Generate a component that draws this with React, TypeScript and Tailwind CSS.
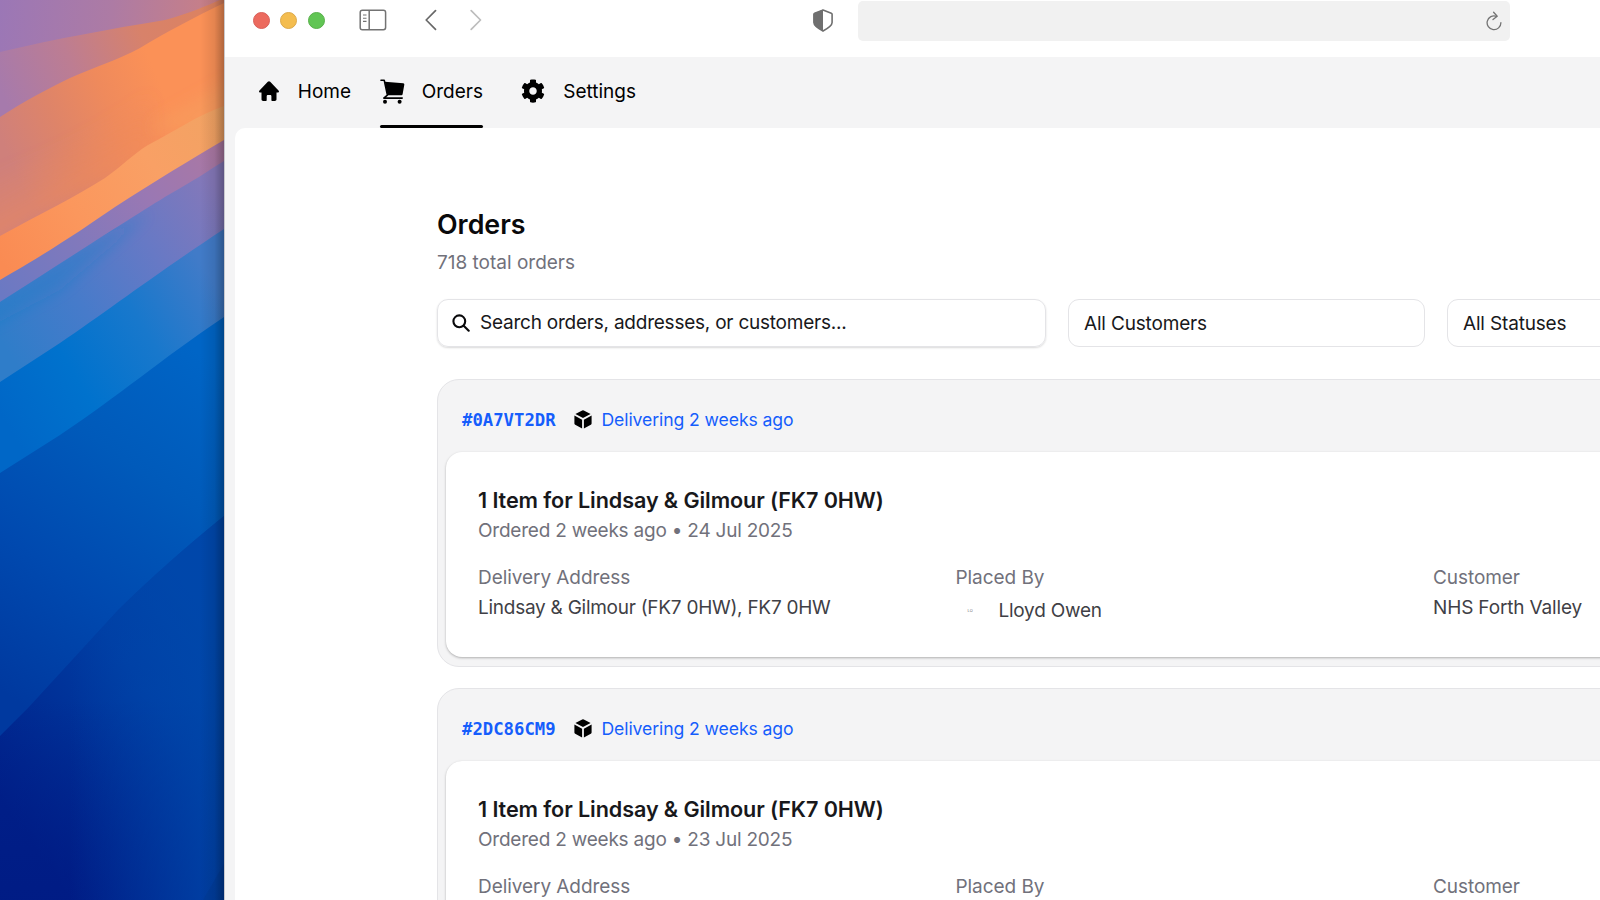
import type { ReactNode } from "react";
import { FaCog } from "react-icons/fa";

interface Order {
  id: string; status: string; title: string; ordered: string; date: string;
  address: string; placedBy: string; customer: string;
}

const orders: Order[] = [
  {
    id: "#0A7VT2DR", status: "Delivering 2 weeks ago", title: "1 Item for Lindsay & Gilmour (FK7 0HW)",
    ordered: "Ordered 2 weeks ago", date: "24 Jul 2025", address: "Lindsay & Gilmour (FK7 0HW), FK7 0HW",
    placedBy: "Lloyd Owen", customer: "NHS Forth Valley",
  },
  {
    id: "#2DC86CM9", status: "Delivering 2 weeks ago", title: "1 Item for Lindsay & Gilmour (FK7 0HW)",
    ordered: "Ordered 2 weeks ago", date: "23 Jul 2025", address: "Lindsay & Gilmour (FK7 0HW), FK7 0HW",
    placedBy: "Lloyd Owen", customer: "NHS Forth Valley",
  },
];

function Gradient({ id, from, to, stops }: { id: string; from: [number, number]; to: [number, number]; stops: string[] }) {
  return (
    <linearGradient id={id} gradientUnits="userSpaceOnUse" x1={from[0]} y1={from[1]} x2={to[0]} y2={to[1]}>
      {stops.map((c, i) => <stop key={i} offset={i / (stops.length - 1)} stopColor={c} />)}
    </linearGradient>
  );
}

function Wallpaper() {
  return (
    <svg width="224" height="900" viewBox="0 0 224 900" className="block">
      <defs>
        <Gradient id="w1" from={[0, 0]} to={[224, 20]} stops={["#9b77b6", "#ad7ba4", "#cc8082"]} />
        <Gradient id="w2" from={[0, 90]} to={[210, 0]} stops={["#a67aac", "#bd7d92", "#d8826a", "#dc8260"]} />
        <Gradient id="w3" from={[10, 160]} to={[165, 95]} stops={["#cf807b", "#de8469", "#ef8a5c", "#fb9157"]} />
        <Gradient id="w3b" from={[60, 130]} to={[100, 200]} stops={["#f08a5800", "#f28b5899"]} />
        <Gradient id="w4" from={[0, 260]} to={[224, 110]} stops={["#fa8b53", "#fb975d", "#f9a065", "#f1a363"]} />
        <Gradient id="w5" from={[0, 290]} to={[224, 150]} stops={["#6b79c3", "#8079bc", "#9a78b3", "#ac78a2"]} />
        <Gradient id="w6" from={[0, 340]} to={[224, 200]} stops={["#2f7dc9", "#477bca", "#6779c5", "#8578b9"]} />
        <Gradient id="w7" from={[10, 430]} to={[224, 300]} stops={["#0067c7", "#0072cd", "#1878cc", "#417bc8"]} />
        <Gradient id="w8" from={[224, 370]} to={[0, 690]} stops={["#0065c6", "#005aba", "#0049af", "#00399f"]} />
        <Gradient id="w9" from={[224, 640]} to={[0, 800]} stops={["#0047ab", "#003ea4", "#002f96", "#00218a"]} />
        <Gradient id="w10" from={[0, 700]} to={[0, 900]} stops={["#00198200", "#001982aa"]} />
        <Gradient id="w11" from={[70, 0]} to={[215, 0]} stops={["#0047aa00", "#0047aacc"]} />
        <linearGradient id="shade">
          <stop offset="0" stopColor="#000" stopOpacity="0" />
          <stop offset="0.6" stopColor="#000" stopOpacity="0.09" />
          <stop offset="1" stopColor="#000" stopOpacity="0.3" />
        </linearGradient>
        <filter id="soft"><feGaussianBlur stdDeviation="7" /></filter>
        <clipPath id="band"><path d="M0 302C60 264 130 218 170 194C190 183 208 171 224 161V900H0Z" /></clipPath>
      </defs>
      <rect width="224" height="900" fill="url(#w1)" />
      <path fill="url(#w2)" d="M0 52C60 38 110 29 165 20C190 13 206 6 220 0H224V900H0Z" />
      <path fill="url(#w3)" d="M0 117C25 101 45 90 70 78C95 67 120 59 140 48C168 31 195 17 224 3V900H0Z" />
      <path fill="url(#w3b)" filter="url(#soft)" d="M-20 180C50 155 95 135 150 95V150L-20 250Z" />
      <path fill="#f4a262" fillOpacity="0.4" filter="url(#soft)" d="M160 120L240 75V130H150Z" />
      <path fill="url(#w4)" d="M0 236C40 214 75 197 105 178C122 166 132 155 148 145C175 131 198 115 224 106V900H0Z" />
      <path fill="url(#w5)" d="M0 280C55 248 80 231 115 207C155 181 190 160 224 140V900H0Z" />
      <path fill="url(#w6)" d="M0 302C60 264 130 218 170 194C190 183 208 171 224 161V900H0Z" />
      <g clipPath="url(#band)">
        <path fill="#1c7bc6" fillOpacity="0.35" filter="url(#soft)" d="M-20 310L70 252L150 213L60 290L-20 332Z" />
      </g>
      <path fill="url(#w7)" d="M0 382L60 343C110 309 150 278 224 229V900H0Z" />
      <path fill="url(#w8)" d="M0 473L60 435C120 395 160 360 224 317V900H0Z" />
      <path fill="url(#w9)" d="M0 736L28 708L118 610C150 579 185 547 224 516V900H0Z" />
      <path fill="url(#w10)" d="M0 736L28 708L118 610C150 579 185 547 224 516V900H0Z" />
      <path fill="url(#w11)" d="M70 900V662L118 610C150 579 185 547 224 516V900Z" />
      <path fill="#003a94" fillOpacity="0.5" d="M224 864L203 900H224Z" />
      <rect x="200" width="24" height="900" fill="url(#shade)" />
    </svg>
  );
}

function HomeIcon() {
  return (
    <svg width="20" height="20" viewBox="0 0 20 20">
      <path d="M8.800.7a1.800 1.800 0 0 1 2.400 0l8.300 8.800c.9.900.4 2.100-.8 2.100h-1.200v6.700c0 1-.7 1.700-1.700 1.700h-2.400c-.6 0-1-.4-1-1v-3.700c0-.8-.5-1.300-1.200-1.300H8.900c-.7 0-1.200.5-1.200 1.300V19c0 .6-.4 1-1 1H4.200c-1 0-1.700-.7-1.700-1.700v-6.700H1.300C.1 11.600-.4 10.400.5 9.500z" />
    </svg>
  );
}

function CartIcon() {
  return (
    <svg width="25" height="25" viewBox="0 0 25 25">
      <path d="M1 1.200h3.200l3.200 15-3.600 2.900h18.400" fill="none" stroke="#000" strokeWidth="1.600" strokeLinejoin="round" strokeLinecap="round" />
      <path d="M4.800 2.800l18.500 1.500c.7.100 1.200.7 1 1.400l-1.700 9.600c-.1.600-.6.900-1.100.9H7.500z" />
      <circle cx="5" cy="22.700" r="2" />
      <circle cx="19.600" cy="22.700" r="2" />
    </svg>
  );
}

function CubeIcon() {
  return (
    <svg width="18" height="19" viewBox="0 0 18 19">
      <path d="M8.200.4a1.600 1.600 0 0 1 1.600 0l6.800 3.500L9 7.900 1.400 3.900zM.4 5.600l7.700 4.100v8.800l-6.900-3.700c-.5-.3-.8-.8-.8-1.300zM17.600 5.600v7.900c0 .5-.3 1-.8 1.300l-6.900 3.700V9.700z" />
    </svg>
  );
}

function TitleBar() {
  return (
    <div className="flex h-[57px] items-start bg-white">
      <div className="flex gap-[10.500px] pl-[27.500px] pt-[11.500px]">
        <span className="size-[17px] rounded-full border border-[#d9605a] bg-[#ec6a5e]" />
        <span className="size-[17px] rounded-full border border-[#dca94a] bg-[#f4bd4f]" />
        <span className="size-[17px] rounded-full border border-[#58b04a] bg-[#61c554]" />
      </div>
      <svg className="ml-[34.500px] mt-[9px]" width="28" height="23" viewBox="0 0 28 23" fill="none" stroke="#737373" strokeWidth="1.500">
        <rect x="1.200" y="1.200" width="25.400" height="19.600" rx="2.200" />
        <path d="M10.200 1.200v19.600" />
        <path d="M4 6h3.500M4 9.200h3.500M4 12.400h3.500" strokeWidth="1.100" />
      </svg>
      <svg className="ml-[38px] mt-[9px]" width="12" height="22" viewBox="0 0 12 22" fill="none" stroke="#686868" strokeWidth="1.700" strokeLinecap="round" strokeLinejoin="round">
        <path d="M10.500 1.700L1.200 11l9.300 9.300" />
      </svg>
      <svg className="ml-[33px] mt-[9px]" width="12" height="22" viewBox="0 0 12 22" fill="none" stroke="#bdbdbd" strokeWidth="1.700" strokeLinecap="round" strokeLinejoin="round">
        <path d="M1.200 1.700L10.500 11l-9.300 9.300" />
      </svg>
      <svg className="ml-[331px] mt-[9px]" width="20" height="23" viewBox="0 0 20 23">
        <path d="M10 1l8.300 3.200c.5.200.8.600.8 1.100v8.200c0 3.600-5 6.300-9.100 8.500C5.900 19.800.9 17.100.9 13.500V5.300c0-.5.3-.9.800-1.100z" fill="none" stroke="#6f6f6f" strokeWidth="1.600" />
        <path d="M10 .6v21.500C5.900 19.900.9 17.100.9 13.500V5.300c0-.5.3-.9.800-1.100z" fill="#6f6f6f" />
      </svg>
      <div className="ml-[25px] mt-px flex h-10 w-[652px] items-center justify-end rounded-[5px] bg-[#f1f1f1] pr-2">
        <svg width="16" height="20" viewBox="0 0 16 20" fill="none" stroke="#737373" strokeWidth="1.300" strokeLinecap="round" strokeLinejoin="round">
          <path d="M14.900 11.700a6.900 6.900 0 1 1-4.400-6.400" />
          <path d="M7.600 1.300l3.600 4-4.200 3.300" />
        </svg>
      </div>
    </div>
  );
}

function NavItem({ icon, label, active, className }: { icon: ReactNode; label: string; active?: boolean; className: string }) {
  return (
    <div className={`flex h-full shrink-0 flex-col ${className}`}>
      <div className="flex h-[68px] items-center justify-between">
        {icon}
        <span className="whitespace-nowrap pt-0.5 text-[19px]">{label}</span>
      </div>
      {active && <div className="h-[3px] rounded-full bg-black" />}
    </div>
  );
}

function Field({ label, children }: { label: string; children: ReactNode }) {
  return (
    <div className="w-[477.500px] shrink-0">
      <div className="h-[30px] tracking-[-0.06px] text-[#71717b]">{label}</div>
      {children}
    </div>
  );
}

function OrderCard({ order }: { order: Order }) {
  return (
    <div className="h-[288px] rounded-[22px] border-[1.500px] border-[#e4e4e7] bg-[#f4f4f5] px-2 pb-2">
      <div className="flex h-[72px] items-center px-4 pt-[7px]">
        <span className="w-[112px] pt-px font-['DejaVu_Sans_Mono',monospace] text-[17.300px] font-bold leading-6 text-[#155dfc]">{order.id}</span>
        <CubeIcon />
        <span className="ml-[9.500px] pt-px text-[17.600px] leading-6 tracking-[-0.09px] text-[#155dfc]">{order.status}</span>
      </div>
      <div className="h-[205px] rounded-[16px] bg-white px-8 pt-[34px] text-[19px] leading-[29px] shadow-[0_1px_3px_rgba(0,0,0,0.18),0_1px_2px_rgba(0,0,0,0.12)]">
        <div className="h-[30px] text-[21.600px] font-semibold tracking-[-0.09px] text-[#18181b]">{order.title}</div>
        <div className="tracking-[-0.220px] text-[#71717b]">{order.ordered} • {order.date}</div>
        <div className="mt-[18px] flex text-[#3f3f46]">
          <Field label="Delivery Address">
            <span className="tracking-[-0.260px]">{order.address}</span>
          </Field>
          <Field label="Placed By">
            <div className="flex h-[34px] items-center tracking-[-0.250px]">
              <span className="w-[43px] pl-3 text-[4px] tracking-normal text-[#71717b]">LO</span>
              {order.placedBy}
            </div>
          </Field>
          <Field label="Customer">
            <span className="tracking-[-0.150px]">{order.customer}</span>
          </Field>
        </div>
      </div>
    </div>
  );
}

export default function App() {
  return (
    <div className="flex h-[900px] w-[1600px] overflow-hidden bg-white font-['Inter',sans-serif] text-[#18181b]">
      <div className="w-[224px] shrink-0"><Wallpaper /></div>
      <div className="min-w-0 flex-1 overflow-hidden border-l border-[#c9c9ce] bg-[#f4f4f5]">
        <TitleBar />
        <nav className="flex h-[71px] text-black">
          <NavItem className="ml-[34px] w-[92px]" icon={<HomeIcon />} label="Home" />
          <NavItem className="ml-[29px] w-[103px]" icon={<CartIcon />} label="Orders" active />
          <NavItem className="ml-[38px] w-[115px]" icon={<FaCog size={24} />} label="Settings" />
        </nav>
        <main className="ml-[10px] h-[772px] w-[1900px] rounded-tl-[10px] bg-white pl-[202px] pt-[78px]">
          <h1 className="h-[37px] text-[26.800px] font-semibold leading-[37px] text-[#09090b]">Orders</h1>
          <p className="h-[38px] pt-px text-[19px] leading-[38px] text-[#71717b]">718 total orders</p>
          <div className="mt-[18px] flex gap-[22px] text-[19px]">
            <div className="flex h-[47.500px] w-[609px] items-center rounded-[11px] border-[1.500px] border-[#e4e4e7] pl-[14px] shadow-[0_1px_2px_rgba(0,0,0,0.15)]">
              <svg width="18" height="18" viewBox="0 0 18 18" fill="none" stroke="#09090b" strokeWidth="2.100" strokeLinecap="round">
                <circle cx="7.300" cy="7.300" r="5.900" />
                <path d="M11.700 11.700l5 5" />
              </svg>
              <span className="ml-[10px] tracking-[-0.230px]">Search orders, addresses, or customers...</span>
            </div>
            <div className="flex h-[47.500px] w-[357px] items-center rounded-[11px] border-[1.500px] border-[#e4e4e7] pl-[15px] pt-0.5 tracking-[-0.170px]">All Customers</div>
            <div className="flex h-[47.500px] w-[357px] items-center rounded-[11px] border-[1.500px] border-[#e4e4e7] pl-[15px] pt-0.5 tracking-[-0.170px]">All Statuses</div>
          </div>
          <div className="mt-[32.500px] flex w-[1493px] flex-col gap-[21px]">
            {orders.map((o) => <OrderCard key={o.id} order={o} />)}
          </div>
        </main>
      </div>
    </div>
  );
}
